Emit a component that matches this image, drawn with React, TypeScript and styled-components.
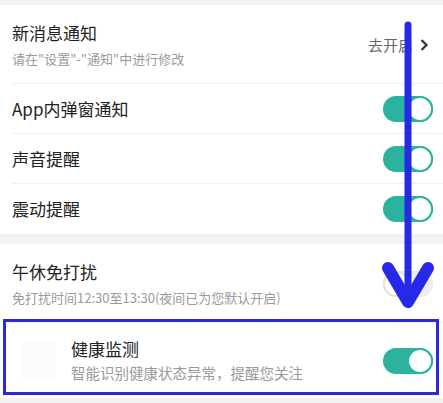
import styled, { createGlobalStyle } from "styled-components";

const GlobalStyle = createGlobalStyle`
    html, body {
        margin: 0;
        padding: 0;
        background: #f2f2f2;
        font-family: "Noto Sans CJK SC", "Noto Sans", sans-serif;
    }
`;

type Item = {
    title: string;
    desc?: string;
    toggle?: boolean;
    link?: string;
};

const topItems: Item[] = [
    { title: "新消息通知", desc: "请在\"设置\"-\"通知\"中进行修改", link: "去开启" },
    { title: "App内弹窗通知", toggle: true },
    { title: "声音提醒", toggle: true },
    { title: "震动提醒", toggle: true },
];

const App = () => {
    return (
        <Page>
            <GlobalStyle />
            <Section>
                {topItems.map((item, i) => (
                    <Row key={item.title} $tall={!!item.desc} $last={i === topItems.length - 1}>
                        <TextBlock>
                            <Title>{item.title}</Title>
                            {item.desc && <Desc>{item.desc}</Desc>}
                        </TextBlock>
                        {item.link && (
                            <Link>
                                {item.link}
                                <Chevron viewBox="0 0 10 14">
                                    <path d="M2.5 2 L7.5 7 L2.5 12" />
                                </Chevron>
                            </Link>
                        )}
                        {item.toggle !== undefined && <Toggle $on={item.toggle} />}
                    </Row>
                ))}
            </Section>
            <Section>
                <Row $tall $last={false}>
                    <TextBlock>
                        <Title>午休免打扰</Title>
                        <Desc>免打扰时间12:30至13:30(夜间已为您默认开启)</Desc>
                    </TextBlock>
                    <Toggle $on={false} />
                </Row>
                <HealthRow>
                    <IconSlot />
                    <TextBlock>
                        <Title>健康监测</Title>
                        <HealthDesc>智能识别健康状态异常，提醒您关注</HealthDesc>
                    </TextBlock>
                    <Toggle $on />
                </HealthRow>
            </Section>
            <Highlight />
            <Arrow viewBox="0 0 443 403">
                <line x1="408" y1="25" x2="408" y2="298" />
                <polyline points="388,268 408,302 428,268" />
            </Arrow>
        </Page>
    );
};

export default App;

const Page = styled.div`
    position: relative;
    width: 443px;
    height: 403px;
    overflow: hidden;
    padding-top: 5px;
    box-sizing: border-box;
    display: flex;
    flex-direction: column;
    gap: 10px;
`;

const Section = styled.section`
    background: #ffffff;
    display: flex;
    flex-direction: column;
`;

const Row = styled.div<{ $tall: boolean; $last: boolean }>`
    position: relative;
    height: ${({ $tall }) => ($tall ? "79px" : "50px")};
    padding: 0 10px 0 12px;
    display: flex;
    align-items: center;
    justify-content: space-between;

    &::after {
        content: "";
        display: ${({ $last }) => ($last ? "none" : "block")};
        position: absolute;
        left: 12px;
        right: 0;
        bottom: 0;
        height: 1px;
        background: #f0f0f0;
    }
`;

const TextBlock = styled.div`
    display: flex;
    flex-direction: column;
    gap: 6px;
    flex: 1;
`;

const Title = styled.div`
    font-size: 17px;
    line-height: 22px;
    color: #222222;
`;

const Desc = styled.div`
    font-size: 13px;
    line-height: 18px;
    color: #9a9a9a;
`;

const HealthDesc = styled(Desc)`
    font-size: 14.5px;
    line-height: 20px;
    color: #999999;
    margin-top: -3px;
`;

const Link = styled.div`
    display: flex;
    align-items: center;
    gap: 6px;
    font-size: 15px;
    color: #666666;
    margin-right: 4px;
`;

const Chevron = styled.svg`
    width: 10px;
    height: 14px;
    fill: none;
    stroke: #333333;
    stroke-width: 2.2;
`;

const Toggle = styled.div<{ $on: boolean }>`
    position: relative;
    width: 50px;
    height: 26px;
    border-radius: 13px;
    background: ${({ $on }) => ($on ? "#2bb39e" : "#ededed")};
    flex-shrink: 0;

    &::after {
        content: "";
        position: absolute;
        top: 0;
        ${({ $on }) => ($on ? "right: 0;" : "left: 0;")}
        width: 26px;
        height: 26px;
        box-sizing: border-box;
        border-radius: 50%;
        background: #ffffff;
        border: 2px solid ${({ $on }) => ($on ? "#2bb39e" : "#e2e2e2")};
    }
`;

const HealthRow = styled.div`
    height: 75px;
    padding: 0 10px 0 22px;
    display: flex;
    align-items: center;
    gap: 16px;
`;

const IconSlot = styled.div`
    width: 33px;
    height: 38px;
    border-radius: 4px;
    background: #fbfbfb;
`;

const Highlight = styled.div`
    position: absolute;
    left: 3px;
    top: 319px;
    width: 436px;
    height: 76px;
    box-sizing: border-box;
    border: 3px solid #2b2bd6;
    pointer-events: none;
`;

const Arrow = styled.svg`
    position: absolute;
    left: 0;
    top: 0;
    width: 443px;
    height: 403px;
    pointer-events: none;
    fill: none;
    stroke: #2828e8;
    stroke-linecap: round;
    stroke-linejoin: round;

    line {
        stroke-width: 7;
    }

    polyline {
        stroke-width: 12;
    }
`;
